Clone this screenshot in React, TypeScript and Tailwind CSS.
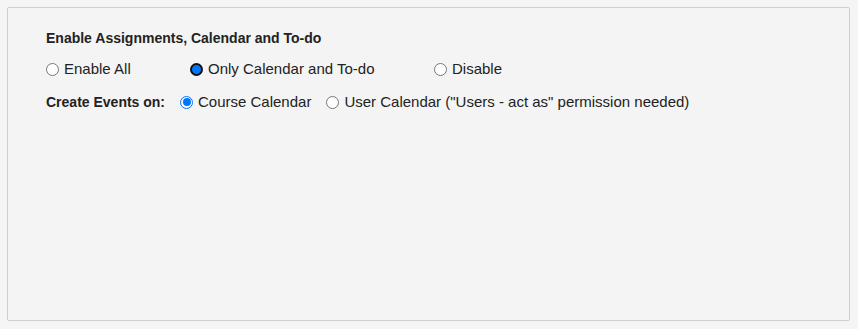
import clsx from "clsx";

type RadioProps = {
	label: string;
	checked?: boolean;
	focused?: boolean;
	className?: string;
};

function Radio({ label, checked, focused, className }: RadioProps) {
	return (
		<label className={clsx("flex items-center gap-[5px]", className)}>
			<span
				className={clsx(
					"flex h-[13px] w-[13px] shrink-0 items-center justify-center rounded-full",
					checked
						? focused
							? "border-2 border-[#111] bg-[#0075ff]"
							: "border-[1.5px] border-[#0075ff] bg-white"
						: "border border-[#767676] bg-white",
				)}
			>
				{checked && !focused && (
					<span className="h-[8px] w-[8px] rounded-full bg-[#0075ff]" />
				)}
			</span>
			<span>{label}</span>
		</label>
	);
}

export default function App() {
	return (
		<div
			className="min-h-[329px] bg-[#f5f5f5] p-[7px] pr-[8px] text-[15px] text-[#222]"
			style={{ fontFamily: '"Liberation Sans", Arial, sans-serif' }}
		>
			<div className="h-[314px] rounded-[2px] border border-[#cfcfcf] bg-[#f4f4f4] pl-[38px] pt-[21px]">
				<div className="text-[14px] font-bold leading-[18px]">
					Enable Assignments, Calendar and To-do
				</div>
				<div className="mt-[13px] flex h-[18px] items-center">
					<Radio label="Enable All" className="w-[144px]" />
					<Radio label="Only Calendar and To-do" checked focused className="w-[244px]" />
					<Radio label="Disable" />
				</div>
				<div className="mt-[15px] flex h-[18px] items-center">
					<span className="w-[134px] text-[14px] font-bold">Create Events on:</span>
					<Radio label="Course Calendar" checked className="mr-[15px]" />
					<Radio label='User Calendar ("Users - act as" permission needed)' />
				</div>
			</div>
		</div>
	);
}
